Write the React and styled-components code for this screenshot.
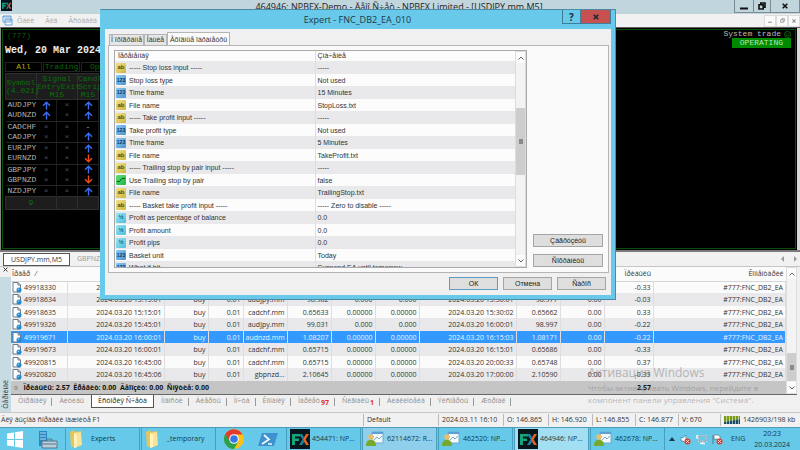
import styled, { createGlobalStyle, css } from "styled-components";

const GlobalStyle = createGlobalStyle`
  *, *::before, *::after {
    box-sizing: border-box;
  }

  html, body, #root {
    height: 100%;
    margin: 0;
  }

  body {
    overflow: hidden;
    font-family: "Open Sans", "Noto Sans", sans-serif;
    font-size: 7px;
    line-height: 12px;
    color: #333;
    background: #f0f0f0;
  }

  button {
    font: inherit;
    color: inherit;
    margin: 0;
    padding: 0;
    border: none;
    background: none;
    white-space: nowrap;
  }

  table {
    border-collapse: collapse;
    border-spacing: 0;
    table-layout: fixed;
  }

  th, td {
    padding: 0;
    font-weight: 400;
    white-space: nowrap;
    overflow: hidden;
  }

  svg {
    display: block;
    flex: none;
  }
`;

const Desktop = styled.div`
  position: relative;
  height: 100%;
  display: flex;
  flex-direction: column;
  overflow: hidden;
`;

/* ---------- main window ---------- */

const TitleBar = styled.header`
  flex: none;
  height: 14px;
  display: flex;
  align-items: flex-start;
  padding-left: 1px;
  background: #c1d5dd;
`;

const WindowTitle = styled.h1`
  flex: 1;
  margin: 0;
  padding-left: 52px;
  font-size: 9px;
  line-height: 13px;
  font-weight: 400;
  text-align: center;
  white-space: nowrap;
  color: #222;
`;

const WindowButtons = styled.div`
  display: flex;
  border: 1px solid #7d8b92;
  border-top: none;
`;

const WindowButton = styled.button`
  width: ${(props) => props.$width}px;
  height: 12px;
  display: grid;
  place-items: center;
  color: #111;

  & + & {
    border-left: 1px solid #7d8b92;
  }
`;

const MenuBar = styled.nav`
  flex: none;
  height: 13px;
  display: flex;
  align-items: center;
  gap: 11px;
  padding-left: 2px;
  background: #f1f1f1;
  color: #a9aba9;
`;

const MenuIcon = styled.span`
  margin-right: -7px;
`;

const ChildButtons = styled.div`
  margin-left: auto;
  display: flex;
`;

const ChildButton = styled.button`
  width: 12px;
  height: 12px;
  display: grid;
  place-items: center;
  border: 1px solid #dcdcdc;
  background: #fafafa;
  color: #8b9299;
`;

const ChartFrame = styled.main`
  flex: 1;
  min-height: 0;
  display: flex;
  padding: 1px 4px 1px 1px;
  border-top: 1px solid #5f5f5f;
  border-left: 1px solid #888;
  background: linear-gradient(#000, #000) no-repeat 0 0 / calc(100% - 3px) 100%, #d8d8d8;
`;

const Chart = styled.section`
  flex: 1;
  min-width: 0;
  display: flex;
  justify-content: space-between;
  align-items: flex-start;
  border: 1px solid #064f06;
  background: #000;
  font-family: "Liberation Mono", monospace;
  font-size: 8px;
  line-height: 10px;
`;

const Panel = styled.div`
  width: 120px;
  padding: 1px 2px;
`;

const Magic = styled.div`
  padding-left: 2px;
  color: #0a5c0a;
`;

const Today = styled.div`
  margin-top: 4px;
  font-size: 10px;
  line-height: 12px;
  font-weight: 700;
  white-space: nowrap;
  color: #eee;
`;

const FilterRow = styled.div`
  display: flex;
  gap: 1px;
  margin-top: 5px;
`;

const FilterButton = styled.button`
  width: 37px;
  height: 10px;
  border: 1px solid #222;
  line-height: 8px;
  color: ${(props) => (props.$active ? "#b5ad00" : "#0a6a0a")};
`;

const SignalTable = styled.table`
  width: 94px;
  margin-top: 1px;
  background: #000;

  th, tfoot td {
    background: #1d1d1d;
    color: #087008;
    line-height: 8px;
    text-align: center;
    overflow: visible;
    white-space: pre-line;
    border: 1px solid #2e2e2e;
  }

  thead th {
    height: 26px;
  }

  tbody td {
    height: 10px;
    border-right: 1px solid #1c1c1c;
  }

  tbody tr:nth-child(even) td {
    height: 11px;
    border-bottom: 1px solid #262626;
  }

  tbody td:first-child {
    padding-left: 2px;
    color: #b4b4b4;
    overflow: visible;
    border-right: none;
  }

  tfoot td {
    height: 13px;
  }
`;

const Mark = styled.span`
  display: grid;
  place-items: center;
  color: ${(props) => (props.$bright ? "#aaa" : "#4c4c4c")};
  line-height: 8px;
`;

const SystemTrade = styled.div`
  padding: 0 4px 0 0;
  display: flex;
  flex-direction: column;
  align-items: flex-end;
`;

const SystemLabel = styled.div`
  display: flex;
  align-items: center;
  gap: 3px;
  line-height: 8px;
  color: #bbb;
`;

const Operating = styled.div`
  padding: 0 8px;
  background: #008a00;
  color: #b8e8b8;
`;

const ChartTabs = styled.div`
  flex: none;
  height: 17px;
  display: flex;
  align-items: center;
  gap: 7px;
  padding: 0 3px;
  border-top: 2px solid #7a7a7a;
  border-bottom: 1px solid #c6c6c6;
  background: #f1f1f1;
  color: #999;
`;

const ChartTab = styled.button`
  height: 13px;
  ${(props) =>
    props.$active &&
    css`
      padding: 0 7px;
      border: 1px solid #555;
      background: #fff;
      color: #333;
    `}
`;

const TabArrows = styled.span`
  margin-left: auto;
  display: flex;
  gap: 8px;
  color: #9a9a9a;
`;

/* ---------- terminal ---------- */

const Terminal = styled.section`
  flex: none;
  display: flex;
`;

const TerminalGrip = styled.div`
  width: 11px;
  display: flex;
  flex-direction: column;
  align-items: center;
  justify-content: space-between;
  padding-bottom: 3px;
  background: linear-gradient(#f1f1f1 10px, #c7dbe3 10px);
`;

const VerticalLabel = styled.span`
  writing-mode: vertical-rl;
  transform: rotate(180deg);
  line-height: 10px;
`;

const TerminalBody = styled.div`
  flex: 1;
  min-width: 0;
`;

const History = styled.div`
  display: flex;
  margin-right: 3px;
  border-bottom: 1px solid #666;
`;

const HistoryTable = styled.table`
  flex: 1;
  width: 100%;
  background: #fbfbfb;

  th {
    height: 14px;
    border-bottom: 1px solid #d5d5d5;
  }

  th, td {
    line-height: 11px;
    padding: 0 2px;
    text-align: right;
  }

  tbody td {
    border-right: 1px solid #dedede;
  }

  th:first-child, td:first-child {
    padding-left: 1px;
    text-align: left;
  }

  tfoot td {
    height: 13px;
    background: #c5c5c5;
    color: #111;
    font-weight: 700;
    white-space: pre;
  }
`;

const OrderRow = styled.tr`
  height: ${(props) => (props.$odd ? 12 : 13)}px;
  background: ${(props) => (props.$odd ? "#fbfbfb" : "#e9e9eb")};

  ${(props) =>
    props.$selected &&
    css`
      background: #3399ff;
      color: #e8f3ff;
    `}
`;

const OrderId = styled.span`
  display: flex;
  align-items: center;
  gap: 2px;
`;

const Scrollbar = styled.div`
  flex: none;
  width: 11px;
  display: flex;
  flex-direction: column;
  align-items: center;
  background: #f3f3f3;
  border: 1px solid #dcdcdc;
`;

const ScrollArrow = styled.button`
  width: 100%;
  height: 11px;
  display: grid;
  place-items: center;
  background: #fcfcfc;
`;

const Track = styled.div`
  flex: 1;
  width: 100%;
  display: flex;
  flex-direction: column;
`;

const Thumb = styled.div`
  margin-top: ${(props) => props.$offset}px;
  height: ${(props) => props.$size}px;
  display: grid;
  place-items: center;
  background: #cdcdcd;

  &::after {
    content: "";
    width: 4px;
    height: 5px;
    background: #8a8a8a;
  }
`;

const TerminalTabs = styled.div`
  display: flex;
  gap: 1px;
  height: 17px;
  padding-left: 1px;
  color: #8e8e8e;
`;

const TerminalTab = styled.button`
  position: relative;
  height: 13px;
  padding: 0 6px;
  display: flex;

  &::after {
    content: "";
    position: absolute;
    right: 0;
    top: 3px;
    width: 1px;
    height: 8px;
    background: ${(props) => (props.$divider ? "#999" : "transparent")};
  }

  ${(props) =>
    props.$active &&
    css`
      border: 1px solid #555;
      border-top: none;
      background: #fff;
      color: #222;
    `}
`;

const TabCount = styled.span`
  padding-left: 1px;
  line-height: 16px;
  font-weight: 700;
  color: #e03020;
`;

const StatusBar = styled.footer`
  flex: none;
  height: 15px;
  display: flex;
  border-top: 1px solid #c8c8c8;
  background: #f1f1f1;
`;

const StatusItem = styled.span`
  width: ${(props) => props.$width}px;
  margin: 1px 0;
  padding-left: 3px;
  display: flex;
  align-items: center;
  gap: 3px;
  white-space: nowrap;
  border-left: 1px solid #bbb;
`;

const StatusHelp = styled.span`
  flex: 1;
  padding: 1px;
`;

/* ---------- expert dialog ---------- */

const Dialog = styled.div`
  position: absolute;
  inset: 9px 184px 150px 100px;
  display: flex;
  flex-direction: column;
  padding: 0 4px 4px;
  border: 1px solid #4b8ba5;
  border-left-color: #68c9ea;
  background: #68c9ea;
`;

const DialogBar = styled.div`
  flex: none;
  height: 19px;
  display: flex;
  align-items: flex-start;
`;

const DialogTitle = styled.h2`
  flex: 1;
  margin: 0;
  padding-left: 48px;
  font-size: 9px;
  line-height: 19px;
  font-weight: 400;
  text-align: center;
  color: #1d3945;
`;

const DialogButton = styled.button`
  width: ${(props) => (props.$close ? 30 : 19)}px;
  height: 14px;
  display: grid;
  place-items: center;
  border: 1px solid #3e7d97;
  border-top: none;
  border-left: none;
  font-size: 10px;
  font-weight: 700;
  color: #1b2a33;
  background: ${(props) => (props.$close ? "#c75050" : "#68c9ea")};

  &:first-of-type {
    border-left: 1px solid #3e7d97;
  }
`;

const DialogBody = styled.div`
  flex: 1;
  min-height: 0;
  display: flex;
  flex-direction: column;
  padding: 3px 2px 5px 3px;
  background: #f0f0f0;
  font-family: "Liberation Sans", "DejaVu Sans", sans-serif;
`;

const DialogTabs = styled.div`
  flex: none;
  display: flex;
  align-items: flex-end;
  height: 13px;
  padding-left: 1px;
`;

const DialogTab = styled.button`
  width: ${(props) => props.$width}px;
  height: ${(props) => (props.$active ? 14 : 11)}px;
  margin-bottom: ${(props) => (props.$active ? -1 : 0)}px;
  line-height: 10px;
  overflow: hidden;
  border: 1px solid #b5b5b5;
  border-bottom: none;
  background: ${(props) => (props.$active ? "#fafafa" : "#e6e6e6")};
`;

const TabPanel = styled.div`
  flex: 1;
  min-height: 0;
  display: flex;
  gap: 6px;
  padding: 4px 5px 4px 5px;
  border: 1px solid #b5b5b5;
  background: #fafafa;
`;

const InputList = styled.div`
  flex: 1;
  min-width: 0;
  display: flex;
  overflow: hidden;
  border: 1px solid #a9a9a9;
`;

const InputTable = styled.table`
  flex: 1;
  width: 100%;
  align-self: flex-start;
  background: #fcfcfc;

  th {
    height: 10px;
    line-height: 10px;
    text-align: left;
    padding-left: 3px;
  }

  td {
    line-height: 11px;
  }

  tbody tr {
    height: 12px;
  }

  tbody tr:nth-child(odd) {
    height: 13px;
    background: #e9e9eb;
  }

  td:last-child, th:last-child {
    padding-left: 2px;
    border-left: 1px solid #dedede;
  }
`;

const InputName = styled.span`
  display: flex;
  align-items: center;
  gap: 3px;
  padding-left: 1px;
`;

const typeColors = {
  text: ["#f1e28a", "#cdb53c", "#5b4b00"],
  int: ["#8cc8f0", "#4b95cf", "#0c3560"],
  bool: ["#5fe07c", "#20b548", "#064d18"],
  real: ["#9be4f2", "#4fbfd9", "#0b5570"],
};

const TypeBadge = styled.span`
  width: 10px;
  height: 10px;
  display: grid;
  place-items: center;
  border-radius: 1px;
  font-size: ${(props) => (props.$type === "int" ? 5 : 6)}px;
  line-height: 9px;
  font-weight: 700;
  color: ${(props) => typeColors[props.$type][2]};
  background: linear-gradient(
    135deg,
    ${(props) => typeColors[props.$type][0]},
    ${(props) => typeColors[props.$type][1]}
  );
`;

const SideActions = styled.div`
  width: 70px;
  display: flex;
  flex-direction: column;
  justify-content: flex-end;
  gap: 7px;
  padding-bottom: 1px;
`;

const PushButton = styled.button`
  width: ${(props) => props.$width}px;
  height: 13px;
  line-height: 11px;
  border: 1px solid ${(props) => (props.$primary ? "#5f9cc5" : "#a5a5a5")};
  background: #dedede;
  color: #222;
`;

const DialogFooter = styled.div`
  flex: none;
  display: flex;
  justify-content: flex-end;
  gap: 5px;
  padding: 4px 3px 0 0;
`;

/* ---------- watermark and taskbar ---------- */

const Watermark = styled.div`
  position: absolute;
  right: 32px;
  bottom: 44px;
  width: 180px;
  font-size: 8px;
  line-height: 12px;
  white-space: nowrap;
  color: rgba(130, 130, 130, 0.55);
  pointer-events: none;
`;

const WatermarkTitle = styled.div`
  font-size: 12px;
  line-height: 18px;
`;

const Taskbar = styled.nav`
  flex: none;
  height: 23px;
  display: flex;
  align-items: stretch;
  gap: 1px;
  border-top: 1px solid #4d9db8;
  background: #66c9e9;
  color: #173a48;
`;

const Launcher = styled.button`
  width: ${(props) => props.$width}px;
  display: grid;
  place-items: center;
`;

const TaskButton = styled.button`
  width: 75px;
  display: flex;
  align-items: center;
  gap: ${(props) => props.$gap}px;
  padding-left: 3px;
  border: 1px solid #489fbd;
  border-width: 0 1px;
  background: ${(props) => (props.$tone ? props.$tone : "#66c9e9")};
`;

const Tray = styled.div`
  flex: 1;
  display: flex;
  align-items: center;
  gap: 5px;
  padding-left: 3px;
  white-space: nowrap;
`;

const Language = styled.span`
  padding-left: 3px;
`;

const Clock = styled.time`
  margin-left: auto;
  margin-right: 10px;
  line-height: 11px;
  text-align: center;
`;

const inputs = [
  ["text", "----- Stop loss input -----", "-----"],
  ["int", "Stop loss type", "Not used"],
  ["int", "Time frame", "15 Minutes"],
  ["text", "File name", "StopLoss.txt"],
  ["text", "----- Take profit input -----", "-----"],
  ["int", "Take profit type", "Not used"],
  ["int", "Time frame", "5 Minutes"],
  ["text", "File name", "TakeProfit.txt"],
  ["text", "----- Trailing stop by pair input -----", "-----"],
  ["bool", "Use Trailing stop by pair", "false"],
  ["text", "File name", "TrailingStop.txt"],
  ["text", "----- Basket take profit input -----", "----- Zero to disable -----"],
  ["real", "Profit as percentage of balance", "0.0"],
  ["real", "Profit amount", "0.0"],
  ["real", "Profit pips", "0.0"],
  ["int", "Basket unit", "Today"],
  ["int", "What if hit", "Suspend EA until tomorrow"],
];

const badgeText = { text: "ab", int: "123", real: "½" };

const orders = [
  ["49918330", "2024.03.20 15:00:01", "audjpy.mm", "98.962", "0.000", "2024.03.20 15:15:01", "98.929", "-0.33"],
  ["49918634", "2024.03.20 15:15:01", "audjpy.mm", "98.982", "0.000", "2024.03.20 15:30:01", "98.977", "-0.03"],
  ["49918635", "2024.03.20 15:15:01", "cadchf.mm", "0.65633", "0.00000", "2024.03.20 15:30:02", "0.65662", "0.33"],
  ["49919326", "2024.03.20 15:45:01", "audjpy.mm", "99.031", "0.000", "2024.03.20 16:00:01", "98.997", "-0.22"],
  ["49919671", "2024.03.20 16:00:01", "audnzd.mm", "1.08207", "0.00000", "2024.03.20 16:15:03", "1.08171", "-0.22"],
  ["49919673", "2024.03.20 16:00:01", "cadchf.mm", "0.65715", "0.00000", "2024.03.20 16:15:01", "0.65686", "-0.33"],
  ["49920815", "2024.03.20 16:45:00", "cadchf.mm", "0.65715", "0.00000", "2024.03.20 20:00:33", "0.65748", "0.37"],
  ["49920820", "2024.03.20 16:45:06", "gbpnzd...", "2.10645", "0.00000", "2024.03.20 17:00:00", "2.10590", "-0.33"],
];

const orderColumns = [56, 97, 44, 35, 44, 44, 44, 44, 97, 44, 44, 49];

const signals = [
  ["AUDJPY", "up", "up"],
  ["AUDNZD", "up", "up"],
  ["CADCHF", "x", "-"],
  ["CADJPY", "x", "up"],
  ["EURJPY", "x", "up"],
  ["EURNZD", "x", "down"],
  ["GBPJPY", "x", "up"],
  ["GBPNZD", "x", "down"],
  ["NZDJPY", "x", "up"],
];

const terminalTabs = [
  { label: "Òîðãîâëÿ" },
  { label: "Àêòèâû", last: true },
  { label: "Èñòîðèÿ Ñ÷åòà", active: true },
  { label: "Íîâîñòè" },
  { label: "Àëåðòû" },
  { label: "Ïî÷òà" },
  { label: "Êîìïàíèÿ" },
  { label: "Ìàðêåò", count: 97 },
  { label: "Ñèãíàëû", count: 1 },
  { label: "Áèáëèîòåêà" },
  { label: "Ýêñïåðòû" },
  { label: "Æóðíàë" },
];

function Signal({ value }) {
  if (value === "up" || value === "down") {
    const up = value === "up";
    return (
      <Mark>
        <svg width="9" height="9" viewBox="0 0 9 9" fill="none">
          <path
            d={up ? "M4.5 8.5V1.5M1 4.8L4.5 1.2L8 4.8" : "M4.5 .5V7.5M1 4.2L4.5 7.8L8 4.2"}
            stroke={up ? "#3c6df0" : "#f04a14"}
            strokeWidth="1.4"
          />
        </svg>
      </Mark>
    );
  }
  return <Mark $bright={value === "-"}>{value === "x" ? "×" : "-"}</Mark>;
}

function Chevron({ up }) {
  return (
    <svg width="6" height="4" viewBox="0 0 6 4" fill="none">
      <path d={up ? "M.5 3.5L3 1L5.5 3.5" : "M.5 .5L3 3L5.5 .5"} stroke="#666" />
    </svg>
  );
}

function CrossIcon({ size = 6, width = 1.6 }) {
  return (
    <svg width={size} height={size} viewBox="0 0 6 6" fill="none">
      <path d="M.7 .7L5.3 5.3M5.3 .7L.7 5.3" stroke="currentColor" strokeWidth={width} />
    </svg>
  );
}

function RestoreIcon({ size = 8, width = 1.6 }) {
  return (
    <svg width={size} height={size} viewBox="0 0 8 8" fill="none">
      <path d="M1 2.8H5.2V7H1ZM2.8 2.5V1H7V5.2H5.5" stroke="currentColor" strokeWidth={width} />
    </svg>
  );
}

function MinimizeIcon({ size = 8 }) {
  return (
    <svg width={size} height="8" viewBox="0 0 8 8">
      <path d="M0 5.5H8V7.5H0Z" fill="currentColor" />
    </svg>
  );
}

function FxIcon({ size }) {
  return (
    <svg width={size} height={size} viewBox="0 0 20 20">
      <rect width="20" height="20" fill="#07161c" />
      <path d="M2 16V5H10V7.5H5V9.5H9V12H5V16Z" fill="#12a67a" />
      <path d="M9 5H12L14 8.2L12.5 10.5ZM9 16L12.5 10.5L14.3 12.8L12 16Z" fill="#1487a5" />
      <path d="M16 5H19L15.6 10.5L19 16H16L12.8 10.5Z" fill="#e5642a" />
    </svg>
  );
}

function OrderIcon() {
  return (
    <svg width="10" height="11" viewBox="0 0 10 11">
      <path d="M1 .5H6L8.5 3V10H1Z" fill="#fff" stroke="#6d7a85" />
      <path d="M6 .5V3H8.5" fill="none" stroke="#6d7a85" />
      <circle cx="7" cy="8" r="2.5" fill="#2589cf" />
      <circle cx="6.4" cy="7.3" r=".8" fill="#8fd0f5" />
    </svg>
  );
}

function FolderIcon() {
  return (
    <svg width="15" height="18" viewBox="0 0 15 18">
      <path d="M1 2L5 0L6 2L12 1V16L2 17Z" fill="#e6c55a" />
      <path d="M5 3L12 2L13 15L5 18Z" fill="#f8e396" />
      <path d="M5 3L8 5V17L5 18Z" fill="#fff3bd" />
    </svg>
  );
}

function ServerIcon() {
  return (
    <svg width="20" height="19" viewBox="0 0 20 19">
      <path d="M1 1H9V16H1Z" fill="#2c86c2" />
      <path d="M2 3H8M2 6H8M2 9H8" stroke="#a8dcf5" />
      <path d="M4 11H19V18H4Z" fill="#b9cedb" stroke="#53788e" />
      <path d="M9 11V9H14V11M5 14H18" fill="none" stroke="#53788e" />
    </svg>
  );
}

function ChromeIcon() {
  return (
    <svg width="20" height="20" viewBox="0 0 20 20">
      <circle cx="10" cy="10" r="10" fill="#fbc116" />
      <path d="M1.3 5A10 10 0 0 0 10 20L14.3 12.5L10 10Z" fill="#2aa14c" />
      <path d="M10 5.4H18.6A10 10 0 0 0 1.3 5L5.7 12Z" fill="#e33b2e" />
      <circle cx="10" cy="10" r="4.8" fill="#fff" />
      <circle cx="10" cy="10" r="3.8" fill="#3478e5" />
    </svg>
  );
}

function PowerShellIcon() {
  return (
    <svg width="20" height="15" viewBox="0 0 20 15">
      <path d="M4 1H20L16 14H0Z" fill="#3f92cf" />
      <path d="M6 3L11 7.5L4 12M10 12H14" fill="none" stroke="#f3f9ff" strokeWidth="1.7" />
    </svg>
  );
}

function TerminalIcon() {
  return (
    <svg width="18" height="16" viewBox="0 0 18 16">
      <path d="M6 1H17V12H6Z" fill="#f4f9fc" stroke="#6fa8cc" />
      <path d="M6 1H17V3H6Z" fill="#5c9fd0" />
      <path d="M8 9L11 6L13 8L16 5" fill="none" stroke="#7cb0d0" />
      <circle cx="5" cy="6" r="2.8" fill="#e8bd6a" />
      <path d="M0 15C0 10 2 9 5 9S10 10 10 15Z" fill="#76a82c" />
    </svg>
  );
}

function TrayIcons() {
  return (
    <>
      <svg width="6" height="4" viewBox="0 0 6 4">
        <path d="M0 4L3 0L6 4Z" fill="#173a48" />
      </svg>
      <svg width="11" height="11" viewBox="0 0 11 11">
        <path d="M1 3.5H3L6 1V9L3 7H1Z" fill="#eef6f9" stroke="#567988" strokeWidth=".7" />
        <circle cx="7.5" cy="7.5" r="3" fill="#e33e2e" />
        <path d="M6.3 6.3L8.7 8.7M8.7 6.3L6.3 8.7" stroke="#fff" />
      </svg>
      <svg width="11" height="11" viewBox="0 0 11 11" fill="none">
        <path d="M3 2H10V7H3ZM6.5 7V9M4 9.5H9M1 1V4H3" stroke="#e8f5fa" strokeWidth="1.6" />
        <path d="M3 2H10V7H3Z" stroke="#557b8b" strokeWidth=".8" />
      </svg>
      <svg width="11" height="11" viewBox="0 0 11 11">
        <path d="M1 1V10" stroke="#557b8b" />
        <path d="M2 1H6L8 2V6L5 5H2Z" fill="#fff" stroke="#557b8b" strokeWidth=".7" />
        <circle cx="7.5" cy="7.5" r="3" fill="#e33e2e" />
        <path d="M6.3 6.3L8.7 8.7M8.7 6.3L6.3 8.7" stroke="#fff" />
      </svg>
    </>
  );
}

function SignalPanel() {
  return (
    <Panel>
      <Magic>(777)</Magic>
      <Today>Wed, 20 Mar 2024</Today>
      <FilterRow>
        <FilterButton $active>All</FilterButton>
        <FilterButton>Trading</FilterButton>
        <FilterButton>Open</FilterButton>
      </FilterRow>
      <SignalTable>
        <colgroup>
          <col style={{ width: 31 }} />
          <col style={{ width: 20 }} />
          <col style={{ width: 21 }} />
          <col />
        </colgroup>
        <thead>
          <tr>
            <th>{"Symbol\n(4.021)"}</th>
            <th colSpan={2}>{"Signal\nEntryExit\nM15"}</th>
            <th>{"Candl\nScript\nM15"}</th>
          </tr>
        </thead>
        <tbody>
          {signals.map(([symbol, entry, candle]) => (
            <tr key={symbol}>
              <td>{symbol}</td>
              <td><Signal value={entry} /></td>
              <td><Signal value="x" /></td>
              <td><Signal value={candle} /></td>
            </tr>
          ))}
        </tbody>
        <tfoot>
          <tr>
            <td colSpan={2}>9</td>
            <td />
            <td />
          </tr>
        </tfoot>
      </SignalTable>
    </Panel>
  );
}

function OrderHistory() {
  return (
    <History>
      <HistoryTable>
        <colgroup>
          {orderColumns.map((width, i) => (
            <col key={i} style={{ width }} />
          ))}
          <col />
        </colgroup>
        <thead>
          <tr>
            <th>Îðäåð &nbsp; ⁄</th>
            <th colSpan={10} />
            <th>Ïðèáûëü</th>
            <th>Êîììåíòàðèé</th>
          </tr>
        </thead>
        <tbody>
          {orders.map(([id, opened, symbol, price, stop, closed, closePrice, profit], i) => (
            <OrderRow key={id} $odd={i % 2 === 0} $selected={id === "49919671"}>
              <td>
                <OrderId>
                  <OrderIcon />
                  {id}
                </OrderId>
              </td>
              <td>{opened}</td>
              <td>buy</td>
              <td>0.01</td>
              <td>{symbol}</td>
              <td>{price}</td>
              <td>{stop}</td>
              <td>{stop}</td>
              <td>{closed}</td>
              <td>{closePrice}</td>
              <td>0.00</td>
              <td>{profit}</td>
              <td>#777:FNC_DB2_EA</td>
            </OrderRow>
          ))}
        </tbody>
        <tfoot>
          <tr>
            <td colSpan={11}>
              {" ○   Ïðèáûëü: 2.57  Êðåäèò: 0.00  Äåïîçèò: 0.00  Ñíÿòèå: 0.00"}
            </td>
            <td>2.57</td>
            <td />
          </tr>
        </tfoot>
      </HistoryTable>
      <Scrollbar>
        <ScrollArrow aria-label="Scroll up"><Chevron up /></ScrollArrow>
        <Track><Thumb $offset={74} $size={28} /></Track>
        <ScrollArrow aria-label="Scroll down"><Chevron /></ScrollArrow>
      </Scrollbar>
    </History>
  );
}

function ExpertDialog() {
  return (
    <Dialog role="dialog" aria-labelledby="expert-title">
      <DialogBar>
        <DialogTitle id="expert-title">Expert - FNC_DB2_EA_010</DialogTitle>
        <DialogButton>?</DialogButton>
        <DialogButton $close aria-label="Close">
          <CrossIcon />
        </DialogButton>
      </DialogBar>
      <DialogBody>
        <DialogTabs role="tablist">
          <DialogTab $width={35} role="tab">Î ïðîãðàììå</DialogTab>
          <DialogTab $width={23} role="tab">Îáùèå</DialogTab>
          <DialogTab $width={63} $active role="tab">Âõîäíûå ïàðàìåòðû</DialogTab>
        </DialogTabs>
        <TabPanel>
          <InputList>
            <InputTable>
              <colgroup>
                <col style={{ width: "50%" }} />
                <col />
              </colgroup>
              <thead>
                <tr>
                  <th>Ïåðåìåííàÿ</th>
                  <th>Çíà÷åíèå</th>
                </tr>
              </thead>
              <tbody>
                {inputs.map(([type, name, value], i) => (
                  <tr key={i}>
                    <td>
                      <InputName>
                        <TypeBadge $type={type}>
                          {badgeText[type] || (
                            <svg width="8" height="6" viewBox="0 0 8 6" fill="none">
                              <path d="M0 4.5H2.5L5 1.5H8" stroke="#064d18" />
                            </svg>
                          )}
                        </TypeBadge>
                        {name}
                      </InputName>
                    </td>
                    <td>{value}</td>
                  </tr>
                ))}
              </tbody>
            </InputTable>
            <Scrollbar>
              <ScrollArrow aria-label="Scroll up"><Chevron up /></ScrollArrow>
              <Track><Thumb $offset={45} $size={67} /></Track>
              <ScrollArrow aria-label="Scroll down"><Chevron /></ScrollArrow>
            </Scrollbar>
          </InputList>
          <SideActions>
            <PushButton $width={70}>Çàãðóçèòü</PushButton>
            <PushButton $width={70}>Ñîõðàíèòü</PushButton>
          </SideActions>
        </TabPanel>
        <DialogFooter>
          <PushButton $width={49} $primary>ОК</PushButton>
          <PushButton $width={49}>Отмена</PushButton>
          <PushButton $width={49}>Ñáðîñ</PushButton>
        </DialogFooter>
      </DialogBody>
    </Dialog>
  );
}

export default function App() {
  return (
    <>
      <GlobalStyle />
      <Desktop>
        <TitleBar>
          <FxIcon size={11} />
          <WindowTitle>
            464946: NPBFX-Demo - Äåìî Ñ÷åò - NPBFX Limited - [USDJPY.mm,M5]
          </WindowTitle>
          <WindowButtons>
            <WindowButton $width={18} aria-label="Minimize"><MinimizeIcon /></WindowButton>
            <WindowButton $width={17} aria-label="Restore"><RestoreIcon /></WindowButton>
            <WindowButton $width={29} aria-label="Close"><CrossIcon /></WindowButton>
          </WindowButtons>
        </TitleBar>
        <MenuBar>
          <MenuIcon>
            <svg width="11" height="11" viewBox="0 0 11 11" fill="none">
              <path d="M1 1H9V7H1ZM3 4H10V10H3Z" fill="#f4faff" stroke="#6ba3d8" />
              <path d="M1 2H9M3 5H10" stroke="#6ba3d8" />
            </svg>
          </MenuIcon>
          <button>Ôàéë</button>
          <button>Âèä</button>
          <button>Âñòàâêà</button>
          <ChildButtons>
            <ChildButton aria-label="Minimize chart"><MinimizeIcon size={4} /></ChildButton>
            <ChildButton aria-label="Restore chart"><RestoreIcon size={5} width={1.2} /></ChildButton>
            <ChildButton aria-label="Close chart"><CrossIcon size={4} /></ChildButton>
          </ChildButtons>
        </MenuBar>
        <ChartFrame>
          <Chart>
            <SignalPanel />
            <SystemTrade>
              <SystemLabel>
                System trade
                <svg width="7" height="7" viewBox="0 0 7 7" fill="none">
                  <circle cx="3.5" cy="3.5" r="3" stroke="#0a6a0a" />
                  <path d="M2 5Q3.5 3.5 5 5M2.3 2.5V3M4.7 2.5V3" stroke="#0a6a0a" />
                </svg>
              </SystemLabel>
              <Operating>OPERATING</Operating>
            </SystemTrade>
          </Chart>
        </ChartFrame>
        <ChartTabs>
          <ChartTab $active>USDJPY.mm,M5</ChartTab>
          <ChartTab>GBPNZD.mm,M5</ChartTab>
          <TabArrows>
            <svg width="4" height="6" viewBox="0 0 4 6"><path d="M3 0L0 3L3 6Z" fill="currentColor" /></svg>
            <svg width="4" height="6" viewBox="0 0 4 6"><path d="M1 0L4 3L1 6Z" fill="currentColor" /></svg>
          </TabArrows>
        </ChartTabs>
        <Terminal>
          <TerminalGrip>
            <button aria-label="Close terminal"><CrossIcon size={5} width={1.2} /></button>
            <VerticalLabel>Òåðìèíàë</VerticalLabel>
          </TerminalGrip>
          <TerminalBody>
            <OrderHistory />
            <TerminalTabs role="tablist">
              {terminalTabs.map(({ label, active, last, count }) => (
                <TerminalTab key={label} role="tab" $active={active} $divider={!active && !last}>
                  {label}
                  {count && <TabCount>{count}</TabCount>}
                </TerminalTab>
              ))}
            </TerminalTabs>
          </TerminalBody>
        </Terminal>
        <StatusBar>
          <StatusHelp>Äëÿ âûçîâà ñïðàâêè íàæìèòå F1</StatusHelp>
          <StatusItem $width={75}>Default</StatusItem>
          <StatusItem $width={65}>2024.03.11 16:10</StatusItem>
          <StatusItem $width={45}>O: 146.865</StatusItem>
          <StatusItem $width={44}>H: 146.920</StatusItem>
          <StatusItem $width={43}>L: 146.855</StatusItem>
          <StatusItem $width={43}>C: 146.877</StatusItem>
          <StatusItem $width={42}>V: 670</StatusItem>
          <StatusItem $width={80}>
            <svg width="16" height="8" viewBox="0 0 16 8">
              <path d="M0 0H16V3L0 6Z" fill="#7a9a12" />
              <path d="M0 6L16 3V8H0Z" fill="#174a66" />
              <path d="M2.5 0V8M5.5 0V8M8.5 0V8M11.5 0V8M14.5 0V8" stroke="#f1f1f1" strokeWidth=".6" />
            </svg>
            1426903/198 kb
          </StatusItem>
        </StatusBar>
        <Taskbar>
          <Launcher $width={30} aria-label="Start">
            <svg width="16" height="17" viewBox="0 0 16 17" fill="#fff">
              <path d="M0 2.5L7 1.5V8H0ZM8 1.3L16 0V8H8ZM0 9H7V15.5L0 14.5ZM8 9H16V17L8 15.7Z" />
            </svg>
          </Launcher>
          <Launcher $width={33} aria-label="Server Manager"><ServerIcon /></Launcher>
          <TaskButton $gap={7}><FolderIcon />Experts</TaskButton>
          <TaskButton $gap={7}><FolderIcon />_temporary</TaskButton>
          <Launcher $width={33} aria-label="Chrome"><ChromeIcon /></Launcher>
          <Launcher $width={34} aria-label="PowerShell"><PowerShellIcon /></Launcher>
          <TaskButton $gap={2}><FxIcon size={20} />454471: NP...</TaskButton>
          <TaskButton $gap={3} $tone="#8fcfec"><TerminalIcon />62114672: R...</TaskButton>
          <TaskButton $gap={3}><TerminalIcon />462520: NP...</TaskButton>
          <TaskButton $gap={2} $tone="#a2dff3"><FxIcon size={20} />464946: NP...</TaskButton>
          <TaskButton $gap={3}><TerminalIcon />462678: NP...</TaskButton>
          <Tray>
            <TrayIcons />
            <Language>ENG</Language>
            <Clock>
              20:23
              <br />
              20.03.2024
            </Clock>
          </Tray>
        </Taskbar>
        <Watermark>
          <WatermarkTitle>Активация Windows</WatermarkTitle>
          Чтобы активировать Windows, перейдите в
          <br />
          компонент панели управления "Система".
        </Watermark>
        <ExpertDialog />
      </Desktop>
    </>
  );
}
